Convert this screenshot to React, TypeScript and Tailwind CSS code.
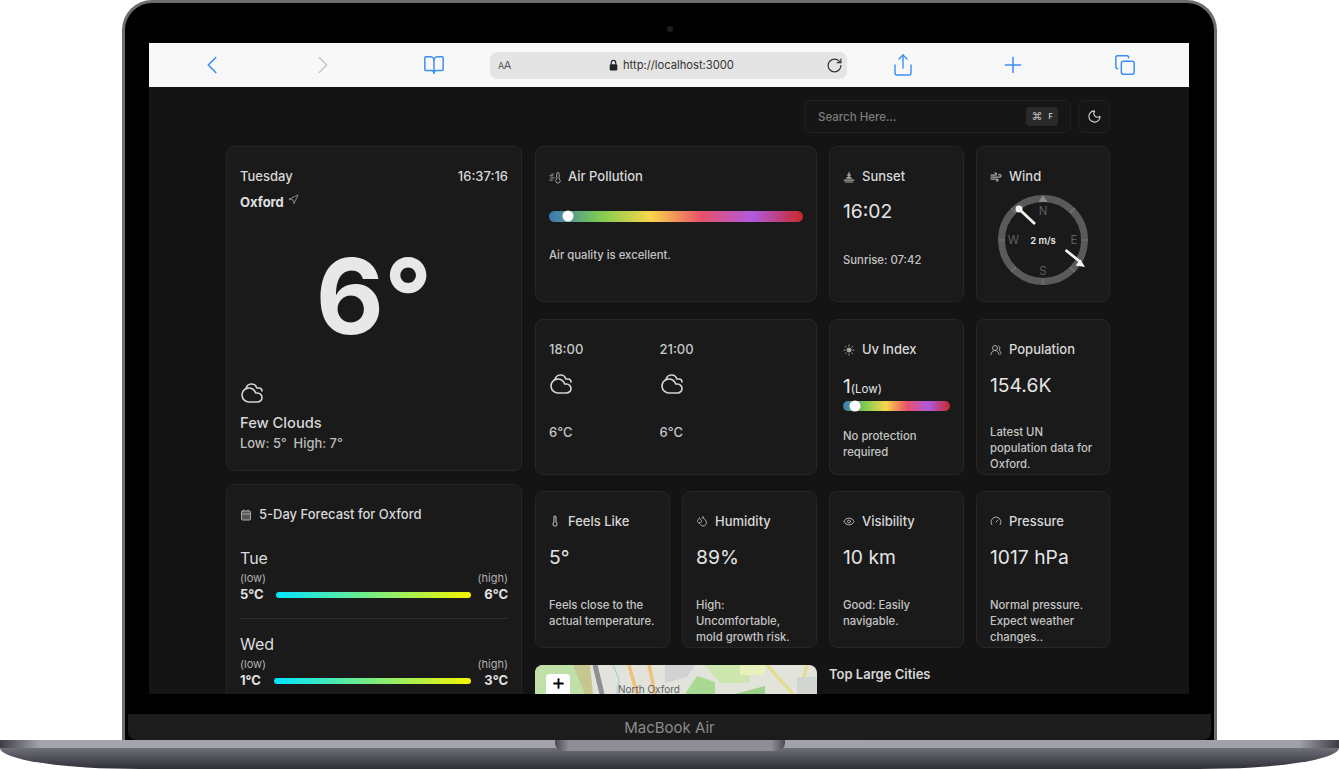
import React from 'react';
import {
  BookOpen,
  Calendar,
  ChevronLeft,
  ChevronRight,
  Cloudy,
  Copy,
  Droplets,
  Eye,
  Gauge,
  Moon,
  Navigation,
  Plus,
  RotateCw,
  Share,
  Sun,
  Thermometer,
  UsersRound,
  Wind,
} from 'lucide-react';

const AirIcon = () => (
  <svg viewBox="0 0 14 14" className="w-[13px] h-[13px]" fill="none" stroke="#a8a8a8" strokeWidth="1.1">
    <path d="M9 1.5a1.4 1.4 0 0 1 2.8 0v6.2a2.6 2.6 0 1 1-2.8 0z" transform="translate(0 1)" />
    <path d="M1 5h3.5M2 7.5h4M1 10h3M3 3h2" strokeLinecap="round" />
  </svg>
);

const SunsetIcon = () => (
  <svg viewBox="0 0 14 14" className="w-[13px] h-[13px]" fill="#a8a8a8">
    <path d="M6.2 1h1.6v2.6H10L7 6.4 4 3.6h2.2z" />
    <path d="M3.4 8.6a3.7 3.7 0 0 1 7.2 0z" />
    <rect x="0.8" y="9.4" width="12.4" height="1.3" rx="0.6" />
    <rect x="2" y="11.6" width="10" height="1.3" rx="0.6" />
  </svg>
);

const LockIcon = () => (
  <svg viewBox="0 0 10 13" className="w-[9px] h-[12px]">
    <path d="M2.500 6V3.800a2.500 2.500 0 0 1 5 0V6" fill="none" stroke="#222" strokeWidth="1.300" />
    <rect x="0.8" y="5.600" width="8.400" height="6.900" rx="1.300" fill="#222" />
  </svg>
);

const Card = ({ className = '', children }: { className?: string; children: React.ReactNode }) => (
  <div className={`bg-[#1a1a1a] border border-[#262626] rounded-lg px-[13px] overflow-hidden ${className}`}>
    {children}
  </div>
);

const Title = ({ icon, children }: { icon: React.ReactNode; children: React.ReactNode }) => (
  <div className="flex items-center gap-[7px] h-5 text-[13px] font-medium text-[#d8d8d8]">
    <span className="w-[12px] flex justify-center text-[#a8a8a8]">{icon}</span>
    {children}
  </div>
);

const RainbowBar = ({ knob, className = '' }: { knob: number; className?: string }) => (
  <div className={`relative rounded-full bg-[linear-gradient(to_right,#3a78b5,#7ecb52_20%,#f9d64a_40%,#e8506a_60%,#b05ae0_80%,#c82828)] ${className}`}>
    <div
      className="absolute top-1/2 -translate-y-1/2 -translate-x-1/2 w-[11px] h-[11px] rounded-full bg-white"
      style={{ left: knob }}
    />
  </div>
);

const Stat = ({
  icon,
  title,
  value,
  lines,
  topClass = 'pt-[19px]',
  subClass = 'mt-[26.5px]',
}: {
  icon: React.ReactNode;
  title: string;
  value: string;
  lines: string[];
  topClass?: string;
  subClass?: string;
}) => (
  <Card className={topClass}>
    <Title icon={icon}>{title}</Title>
    <div className="mt-[11.5px] h-7 text-[19.3px] leading-7 text-[#e5e5e5]">{value}</div>
    <div className={`${subClass} text-[11.3px] leading-4 text-[#c4c4c4] font-medium`}>
      {lines.map((l) => (
        <div key={l}>{l}</div>
      ))}
    </div>
  </Card>
);

const Compass = () => (
  <svg viewBox="0 0 90 90" className="w-[90px] h-[90px] block">
    <circle cx="45" cy="45" r="41.5" fill="none" stroke="#5a5a5a" strokeWidth="7" />
    <path d="M45 0l-4.500 7h9z" fill="#8a8a8a" />
    <g stroke="#747474" strokeWidth="1.200">
      <path d="M45 83v7M0 45h7M83 45h7" />
      <path d="M13 13l5 5M77 13l-5 5M13 77l5-5M77 77l-5-5" />
    </g>
    <g fill="#5f5f5f" fontSize="11.5" textAnchor="middle" fontFamily="Inter, sans-serif">
      <text x="45" y="20">N</text>
      <text x="76" y="49">E</text>
      <text x="45" y="80">S</text>
      <text x="15.5" y="49">W</text>
    </g>
    <text x="45" y="49" fill="#e5e5e5" fontSize="9.5" fontWeight="600" textAnchor="middle" fontFamily="Inter, sans-serif">
      2 m/s
    </text>
    <path d="M21 14l16 15M67.500 55l15 12" stroke="#f2f2f2" strokeWidth="2.800" />
    <circle cx="21" cy="14" r="3.500" fill="#f2f2f2" />
    <path d="M87 72l-9.500-1.500 5-6z" fill="#f2f2f2" />
  </svg>
);

const Day = ({
  day,
  low,
  high,
  barClass,
}: {
  day: string;
  low: string;
  high: string;
  barClass: string;
}) => (
  <div>
    <div className="h-[22px] leading-[22px] text-[16px] text-[#dcdcdc]">{day}</div>
    <div className="flex justify-between h-[15px] mt-px text-[11px] leading-4 text-[#b0b0b0]">
      <span>(low)</span>
      <span>(high)</span>
    </div>
    <div className="flex items-center h-5 text-[13px] font-bold text-[#e0e0e0]">
      <span>{low}</span>
      <div className={`flex-1 h-[6px] rounded-full bg-[linear-gradient(to_right,#00e5ff,#f5f500)] ${barClass}`} />
      <span>{high}</span>
    </div>
  </div>
);

const MapPreview = () => (
  <svg viewBox="0 0 282 29" className="w-[282px] h-[29px] block" preserveAspectRatio="none">
    <rect width="282" height="29" fill="#e2e4dc" />
    <path d="M0 0h40l14 29H0z" fill="#bfe0a6" />
    <path d="M38 0h17l3 29H50z" fill="#c6c68f" />
    <path d="M60 0l7 29" stroke="#8f8f8f" strokeWidth="5" />
    <path d="M94 0l8 29M114 0l6 29" stroke="#f0c17a" strokeWidth="3.500" />
    <path d="M78 0l6 14-2 15" fill="none" stroke="#a9d3d8" strokeWidth="1.500" />
    <path d="M130 0h30l-8 12-22 6z" fill="#d2d2d5" />
    <path d="M150 29l12-18 18 6v12z" fill="#a9d891" />
    <path d="M170 0h45v18h-30z" fill="#cde6ae" />
    <path d="M205 0h25v10h-25z" fill="#eaf0bb" />
    <path d="M232 0l26 29M272 0l-8 29" stroke="#e2dd85" strokeWidth="3" />
    <path d="M200 29l30-8v8z" fill="#9ed089" />
    <path d="M262 12h20v17h-20z" fill="#d2d5d0" />
  </svg>
);

export default function App() {
  return (
    <div className="w-[1339px] h-[769px] bg-white overflow-hidden flex flex-col font-[family-name:Inter,sans-serif]">
      {/* Lid */}
      <div className="ml-[122px] w-[1095px] h-[740px] shrink-0 flex flex-col bg-black border-[3px] border-b-0 border-[#6e6e70] rounded-t-[30px]">
        <div className="h-[40px] shrink-0 flex items-center justify-center">
          <div className="w-[6px] h-[6px] mt-[12px] rounded-full bg-[#1c1c20]" />
        </div>

        {/* Screen */}
        <div className="ml-[24px] w-[1040px] h-[651px] shrink-0 overflow-hidden flex flex-col bg-[#141414]">
          {/* Safari toolbar */}
          <div className="h-[44px] shrink-0 bg-[#f8f8f8] flex items-center text-[#3b8ef5]">
            <ChevronLeft className="ml-[48px] w-[30px] h-[30px] shrink-0" strokeWidth={1.3} />
            <ChevronRight className="ml-[81px] w-[30px] h-[30px] shrink-0 text-[#c8c8c8]" strokeWidth={1.3} />
            <BookOpen className="ml-[85px] w-[22px] h-[22px] shrink-0" strokeWidth={1.6} />
            <div className="ml-[45px] w-[357px] h-[27px] shrink-0 rounded-lg bg-[#e4e4e4] flex items-center text-[#333]">
              <span className="ml-[8px] w-[15px] text-[11px] tracking-[-0.5px] text-[#555]">
                <span className="text-[9px]">A</span>A
              </span>
              <span className="ml-[96px] flex">
                <LockIcon />
              </span>
              <span className="ml-[5px] text-[11.2px] text-[#333]">http://localhost:3000</span>
              <RotateCw className="ml-auto mr-[4px] w-[17px] h-[17px] shrink-0 text-[#333]" strokeWidth={1.7} />
            </div>
            <Share className="ml-[44px] w-[24px] h-[24px] shrink-0" strokeWidth={1.4} />
            <Plus className="ml-[85px] w-[26px] h-[26px] shrink-0" strokeWidth={1.4} />
            <Copy className="ml-[88px] w-[22px] h-[22px] shrink-0" strokeWidth={1.6} />
          </div>

          {/* Search row */}
          <div className="mt-[13px] h-[33px] shrink-0 flex justify-end gap-[7px] pr-[79px]">
            <div className="w-[267px] border border-[#202020] bg-[#161616] rounded-md flex items-center justify-between pl-[13px] pr-[12px]">
              <span className="pt-[2px] text-[11.5px] text-[#7c7c7c] font-medium">Search Here...</span>
              <div className="w-[32px] h-[19px] rounded bg-[#2a2a2a] flex items-center justify-center gap-[6px] text-[#c0c0c0]">
                <span className="text-[11px] leading-none">⌘</span>
                <span className="text-[7px] font-bold leading-none">F</span>
              </div>
            </div>
            <div className="w-[32px] border border-[#202020] bg-[#161616] rounded-md flex items-center justify-center text-[#d8d8d8]">
              <Moon className="w-[15px] h-[15px]" strokeWidth={1.7} />
            </div>
          </div>

          <div className="mt-[13px] flex-1 flex items-start gap-[13px] pl-[77px] pr-[79px]">
            {/* Left column */}
            <div className="w-[296px] shrink-0 flex flex-col gap-[13px]">
              <Card className="h-[325px] pt-[20px] flex flex-col">
                <div className="flex justify-between h-5 items-center text-[13px] font-medium text-[#d8d8d8]">
                  <span>Tuesday</span>
                  <span>16:37:16</span>
                </div>
                <div className="mt-[6px] h-5 flex items-center gap-[4px] text-[13px] font-bold text-[#e0e0e0]">
                  Oxford
                  <Navigation className="w-[11px] h-[11px] -mt-[7px] text-[#c0c0c0]" strokeWidth={1.4} />
                </div>
                <div className="mt-[21px] h-[124px] leading-[124px] text-center text-[105px] font-bold text-[#e8e8e8]">
                  6°
                </div>
                <Cloudy className="mt-[23px] w-[24px] h-[24px] text-[#d4d4d4]" strokeWidth={1.6} />
                <div className="mt-[8px] h-5 leading-5 text-[14.7px] font-medium text-[#d8d8d8]">Few Clouds</div>
                <div className="mt-[2px] leading-[18px] text-[12.9px] font-medium text-[#bdbdbd]">
                  Low: 5°&nbsp;&nbsp;High: 7°
                </div>
              </Card>

              <Card className="h-[400px] pt-[20px]">
                <Title icon={<Calendar className="w-[12px] h-[12px] fill-[#555]" strokeWidth={2} />}>5-Day Forecast for Oxford</Title>
                <div className="mt-[22px]">
                  <Day day="Tue" low="5°C" high="6°C" barClass="ml-[12px] mr-[13px]" />
                  <div className="mt-[13px] mb-[14px] h-px bg-[#2c2c2c]" />
                  <Day day="Wed" low="1°C" high="3°C" barClass="ml-[13px] mr-[13px]" />
                </div>
              </Card>
            </div>

            {/* Right grid */}
            <div className="flex-1 grid grid-cols-[135px_135px_135px_134px] gap-x-3 gap-y-[16.3px] auto-rows-[156.4px]">
              <Card className="col-span-2 pt-[20px]">
                <Title icon={<AirIcon />}>Air Pollution</Title>
                <RainbowBar knob={19} className="mt-[24px] h-[10.500px]" />
                <div className="mt-[25px] text-[11.3px] leading-4 font-medium text-[#c4c4c4]">Air quality is excellent.</div>
              </Card>
              <Card className="pt-[20px]">
                <Title icon={<SunsetIcon />}>Sunset</Title>
                <div className="mt-[10px] h-7 text-[19.3px] leading-7 text-[#e5e5e5]">16:02</div>
                <div className="mt-[27px] text-[11.3px] leading-4 font-medium text-[#c4c4c4]">Sunrise: 07:42</div>
              </Card>
              <Card className="pt-[20px]">
                <Title icon={<Wind className="w-[12px] h-[12px]" strokeWidth={2.500} />}>Wind</Title>
                <div className="mt-[8px] ml-[8px]">
                  <Compass />
                </div>
              </Card>

              <Card className="col-span-2 pt-[19px]">
                <div className="flex text-[13px] font-medium text-[#c8c8c8]">
                  <div className="w-[110.500px]">
                    <div className="h-5 leading-5">18:00</div>
                    <Cloudy className="mt-[13px] w-[24px] h-[24px] text-[#d4d4d4]" strokeWidth={1.6} />
                    <div className="mt-[26px] h-5 leading-5">6°C</div>
                  </div>
                  <div className="w-[110.500px]">
                    <div className="h-5 leading-5">21:00</div>
                    <Cloudy className="mt-[13px] w-[24px] h-[24px] text-[#d4d4d4]" strokeWidth={1.6} />
                    <div className="mt-[26px] h-5 leading-5">6°C</div>
                  </div>
                </div>
              </Card>
              <Card className="pt-[20px]">
                <Title icon={<Sun className="w-[12px] h-[12px] fill-current" strokeWidth={2} />}>Uv Index</Title>
                <div className="mt-3 h-7 leading-7 text-[19.3px] text-[#e5e5e5]">
                  1<span className="text-[11.5px]">(Low)</span>
                </div>
                <RainbowBar knob={12} className="mt-[1px] h-[10px]" />
                <div className="mt-[17px] text-[11.3px] leading-4 font-medium text-[#c4c4c4]">
                  <div>No protection</div>
                  <div>required</div>
                </div>
              </Card>
              <Stat
                icon={<UsersRound className="w-[12px] h-[12px]" strokeWidth={2} />}
                title="Population"
                value="154.6K"
                lines={['Latest UN', 'population data for', 'Oxford.']}
                topClass="pt-[20px]"
                subClass="mt-[25px]"
              />

              <Stat
                icon={<Thermometer className="w-[12px] h-[12px]" strokeWidth={2.400} />}
                title="Feels Like"
                value="5°"
                lines={['Feels close to the', 'actual temperature.']}
              />
              <Stat
                icon={<Droplets className="w-[12px] h-[12px]" strokeWidth={2} />}
                title="Humidity"
                value="89%"
                lines={['High:', 'Uncomfortable,', 'mold growth risk.']}
              />
              <Stat
                icon={<Eye className="w-[13px] h-[13px]" strokeWidth={2} />}
                title="Visibility"
                value="10 km"
                lines={['Good: Easily', 'navigable.']}
              />
              <Stat
                icon={<Gauge className="w-[12px] h-[12px]" strokeWidth={2} />}
                title="Pressure"
                value="1017 hPa"
                lines={['Normal pressure.', 'Expect weather', 'changes..']}
              />

              <div className="col-span-2 mt-px relative rounded-lg overflow-hidden">
                <MapPreview />
                <div className="absolute left-[11px] top-[9px] w-[24px] h-[24px] bg-white rounded-sm flex items-start justify-center pt-[2px] text-black">
                  <Plus className="w-[15px] h-[15px]" strokeWidth={3} />
                </div>
                <span className="absolute left-[83px] top-[16px] text-[10px] leading-4 text-[#5e5e5e]">North Oxford</span>
              </div>
              <div className="col-span-2 mt-px text-[13px] leading-[18px] font-semibold text-[#d8d8d8]">Top Large Cities</div>
            </div>
          </div>
        </div>

        <div className="h-[20px] shrink-0" />
        <div className="h-[26px] shrink-0 mx-[3px] bg-[#1c1c1c] rounded-b-lg flex items-center justify-center pt-[2px] text-[15px] text-[#8c8c8c]">
          MacBook Air
        </div>
      </div>

      {/* Base */}
      <div className="relative h-[29px] shrink-0 flex flex-col">
        <div className="h-[8px] shrink-0 bg-[linear-gradient(to_right,#3c3c42,#a4a4ac_3%,#a0a0a8_97%,#3c3c42)]" />
        <div className="flex-1 rounded-b-[140px_21px] bg-[linear-gradient(to_bottom,#6e6f78,#2e2f37)]" />
        <div className="absolute left-[555px] top-0 w-[230px] h-[11px] rounded-b-lg bg-[linear-gradient(to_right,#4a4a50,#8e8e94_6%,#8e8e94_94%,#4a4a50)]" />
      </div>
    </div>
  );
}
